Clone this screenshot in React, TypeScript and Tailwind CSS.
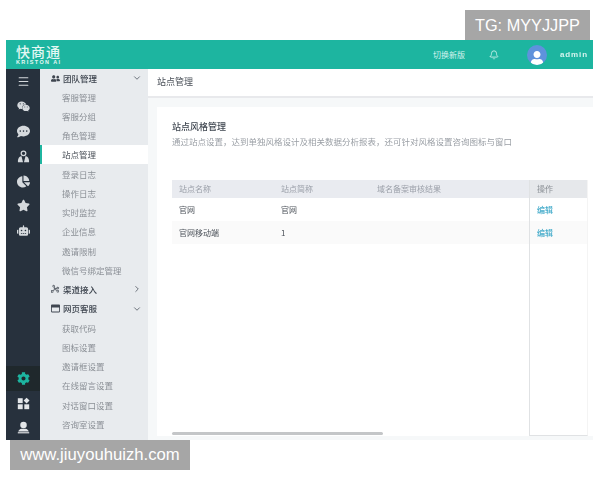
import { Bell, ChevronDown, ChevronRight, Menu } from 'lucide-react';
import {
  FaChartPie,
  FaCog,
  FaCommentDots,
  FaRegWindowMaximize,
  FaRobot,
  FaStar,
  FaUser,
  FaUserFriends,
  FaWeixin,
} from 'react-icons/fa';
import { PiGraph } from 'react-icons/pi';

const font = { cn: "font-['Noto_Sans_CJK_SC','Liberation_Sans',sans-serif]" };

function PeopleIcon({ className }: { className?: string }) {
  return (
    <svg viewBox="0 0 16 16" fill="currentColor" className={className}>
      <path fillRule="evenodd" d="M8 0.5a3.6 3.6 0 1 1 0 7.2a3.6 3.6 0 0 1 0-7.2zM8 2a2.1 2.1 0 1 0 0 4.2a2.1 2.1 0 0 0 0-4.2z" />
      <path d="M3.4 8.2a2.2 2.2 0 0 1 2.2-.4L7.4 15H1.2c-.4-2.6.4-5.2 2.2-6.8zM12.6 8.2a2.2 2.2 0 0 0-2.2-.4L8.6 15h6.2c.4-2.6-.4-5.2-2.2-6.8z" />
    </svg>
  );
}

function WidgetsIcon({ className }: { className?: string }) {
  return (
    <svg viewBox="0 0 16 16" fill="currentColor" className={className}>
      <rect x="1" y="1.5" width="6" height="6" />
      <path d="M11.8 0.8l3.6 3.6-3.6 3.6-3.6-3.6z" />
      <rect x="1" y="9" width="6" height="6" />
      <rect x="9" y="9" width="6" height="6" />
    </svg>
  );
}

function AgentIcon({ className }: { className?: string }) {
  return (
    <svg viewBox="0 0 16 16" fill="currentColor" className={className}>
      <circle cx="8" cy="5" r="4" />
      <path d="M5.6 9.4h4.8c2 .4 3.6 1.6 4 3.6H1.6c.4-2 2-3.2 4-3.6z" />
      <rect x="1" y="13.8" width="14" height="1.4" />
    </svg>
  );
}

const topRail = [Menu, FaWeixin, FaCommentDots, PeopleIcon, FaChartPie, FaStar, FaRobot];

function MenuGroup({ label, open, icon, first }: { label: string; open: boolean; icon: React.ReactNode; first?: boolean }) {
  return (
    <div className={`flex items-center pl-[8px] pr-[6px] text-[#3f4650] ${first ? 'h-[18.25px]' : 'h-[19.25px]'}`}>
      <span className="flex w-[14px] justify-center">{icon}</span>
      <span className="ml-[1px] text-[8.5px] font-medium">{label}</span>
      {open ? (
        <ChevronDown className="ml-auto h-[10px] w-[10px] text-[#555d66]" />
      ) : (
        <ChevronRight className="ml-auto h-[10px] w-[10px] text-[#555d66]" />
      )}
    </div>
  );
}

function MenuItem({ label, active }: { label: string; active?: boolean }) {
  return (
    <div
      className={
        active
          ? 'flex h-[19.25px] items-center border-l-2 border-[#1fb5a0] bg-white pl-[20px] text-[8.5px] text-[#4a5058]'
          : 'flex h-[19.25px] items-center pl-[22px] text-[8.5px] text-[#8b9096]'
      }
    >
      {label}
    </div>
  );
}

export default function App() {
  return (
    <div className={`relative h-[480px] w-[600px] overflow-hidden bg-white ${font.cn}`}>
      <div className="pl-[6px] pt-[40px] blur-[0.6px]">
        <div className="flex h-[400px] w-[587px] flex-col">
          <header className="flex h-[29px] shrink-0 items-center bg-[#1db5a0] text-[#e4f8f4]">
            <div className="ml-[10px] flex flex-col leading-none">
              <span className="text-[14px] font-medium leading-[14px] tracking-[1px]">快商通</span>
              <span className="mt-[1px] font-['Liberation_Sans',sans-serif] text-[5.5px] font-bold leading-[6px] tracking-[1.4px]">
                KRISTON AI
              </span>
            </div>
            <span className="ml-auto text-[8px] text-[#d4f3ee]">切换新版</span>
            <Bell className="ml-[24px] h-[10px] w-[10px] text-[#d4f3ee]" />
            <div className="ml-[28px] flex h-[20px] w-[20px] items-end justify-center overflow-hidden rounded-full bg-[#5f92dc]">
              <FaUser className="h-[14px] w-[14px] text-white" />
            </div>
            <span className="ml-[13px] mr-[5px] font-['Liberation_Sans',sans-serif] text-[8px] font-bold tracking-[0.9px] text-[#d4f3ee]">
              admin
            </span>
          </header>

          <div className="flex min-h-0 flex-1">
            <nav className="flex w-[34px] shrink-0 flex-col justify-between bg-[#27313d] pb-[1px]">
              <div className="flex flex-col pt-[0.5px]">
                {topRail.map((Icon, i) => (
                  <div key={i} className="flex h-[24.8px] items-center justify-center text-[#d5d9dd]">
                    <Icon className="h-[13px] w-[13px]" />
                  </div>
                ))}
              </div>
              <div className="flex flex-col">
                <div className="flex h-[25px] items-center justify-center bg-[#1f282c] text-[#1db5a0]">
                  <FaCog className="h-[13px] w-[13px]" />
                </div>
                <div className="flex h-[24px] items-center justify-center text-[#e3e6e9]">
                  <WidgetsIcon className="h-[13px] w-[13px]" />
                </div>
                <div className="flex h-[24px] items-center justify-center text-[#e3e6e9]">
                  <AgentIcon className="h-[13px] w-[13px]" />
                </div>
              </div>
            </nav>

            <aside className="w-[108px] shrink-0 bg-[#e8ebee]">
              <MenuGroup first label="团队管理" open icon={<FaUserFriends className="h-[9px] w-[9px]" />} />
              <MenuItem label="客服管理" />
              <MenuItem label="客服分组" />
              <MenuItem label="角色管理" />
              <MenuItem label="站点管理" active />
              <MenuItem label="登录日志" />
              <MenuItem label="操作日志" />
              <MenuItem label="实时监控" />
              <MenuItem label="企业信息" />
              <MenuItem label="邀请限制" />
              <MenuItem label="微信号绑定管理" />
              <MenuGroup label="渠道接入" open={false} icon={<PiGraph className="h-[10px] w-[10px]" />} />
              <MenuGroup label="网页客服" open icon={<FaRegWindowMaximize className="h-[9px] w-[9px]" />} />
              <MenuItem label="获取代码" />
              <MenuItem label="图标设置" />
              <MenuItem label="邀请框设置" />
              <MenuItem label="在线留言设置" />
              <MenuItem label="对话窗口设置" />
              <MenuItem label="咨询室设置" />
            </aside>

            <main className="flex min-w-0 flex-1 flex-col bg-[#f6f8f9]">
              <div className="flex h-[29px] shrink-0 items-center border-b-2 border-[#e8e9ec] bg-white pb-[2px] pl-[9px] text-[9px] text-[#4a5058]">
                站点管理
              </div>
              <div className="ml-[9px] mt-[9px] mb-[4px] flex min-h-0 flex-1 flex-col bg-white pl-[15px] pr-[5px]">
                <h2 className="mt-[13px] text-[9px] font-medium leading-[14px] text-[#3f4650]">站点风格管理</h2>
                <p className="whitespace-nowrap text-[8.5px] leading-[14px] text-[#9a9fa5]">
                  {'通过站点设置\uFF0C达到单独风格设计及相关数据分析报表\uFF0C还可针对风格设置咨询图标与窗口'}
                </p>
                <div className="mt-[32px] flex min-h-0 flex-1">
                  <div className="min-w-0 flex-1">
                    <div className="flex h-[18px] items-center bg-[#e9ebf0] pl-[7px] text-[8px] text-[#9a9fa8]">
                      <span className="w-[102px]">站点名称</span>
                      <span className="w-[96px]">站点简称</span>
                      <span>域名备案审核结果</span>
                    </div>
                    <div className="flex h-[23px] items-center pl-[7px] text-[8px] text-[#4a5058]">
                      <span className="w-[102px]">官网</span>
                      <span>官网</span>
                    </div>
                    <div className="flex h-[23px] items-center bg-[#fafafa] pl-[7px] text-[8px] text-[#4a5058]">
                      <span className="w-[102px]">官网移动端</span>
                      <span>1</span>
                    </div>
                  </div>
                  <div className="w-[59px] shrink-0 border-x border-b border-[#e0e2e4] border-r-[#f4f4f4]">
                    <div className="flex h-[18px] items-center bg-[#e6e8eb] pl-[7px] text-[8px] text-[#8b9096]">操作</div>
                    <div className="flex h-[23px] items-center pl-[7px] text-[8px] font-medium text-[#3fa9c9]">编辑</div>
                    <div className="flex h-[23px] items-center bg-[#fafafa] pl-[7px] text-[8px] font-medium text-[#3fa9c9]">编辑</div>
                  </div>
                </div>
              </div>
            </main>
          </div>
        </div>
      </div>

      {/* scrollbar thumb sits over the table */}
      <div className="absolute left-[172px] top-[432px] h-[3px] w-[211px] rounded-sm bg-[#c4c6c8]" />

      {/* watermarks */}
      <div className="absolute left-[465px] top-[10px] flex h-[30px] w-[125px] items-center justify-center bg-[#a6a6a6] font-['Liberation_Sans',sans-serif] text-[16.3px] text-white">
        TG: MYYJJPP
      </div>
      <div className="absolute left-[10px] top-[440px] flex h-[30px] w-[180px] items-center justify-center bg-[#a6a6a6] font-['Liberation_Sans',sans-serif] text-[16.7px] text-white">
        www.jiuyouhuizh.com
      </div>
    </div>
  );
}
